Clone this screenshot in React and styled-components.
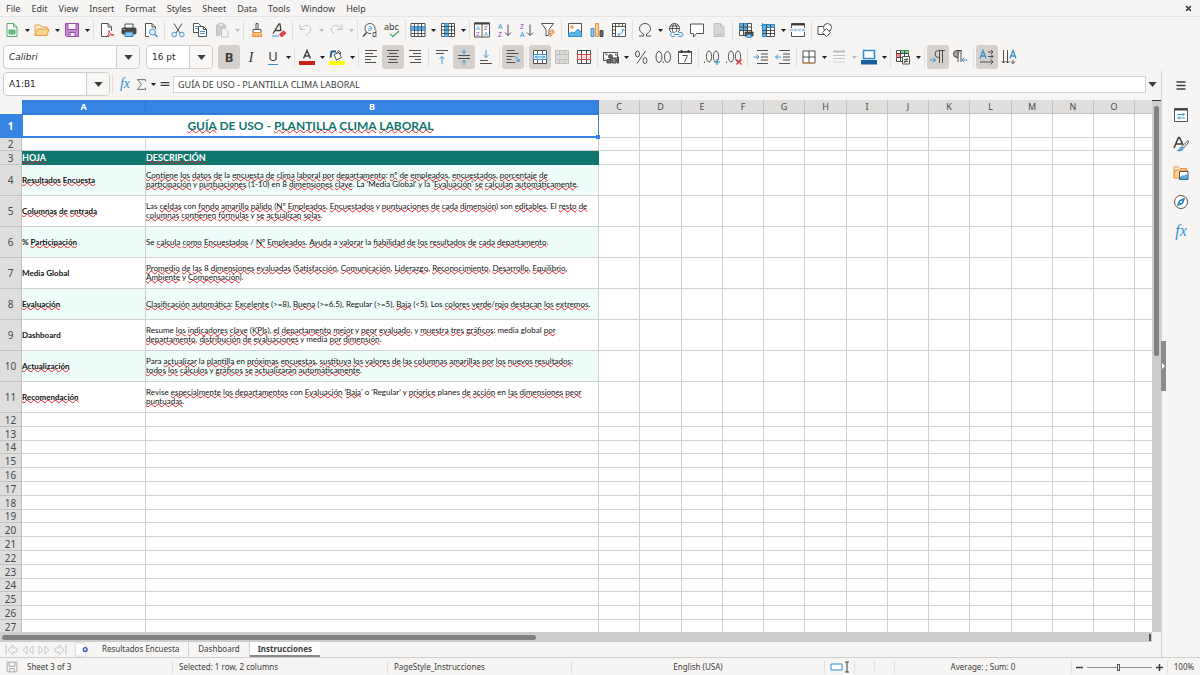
import React from 'react'
import styled, { createGlobalStyle, css } from 'styled-components'

const INK = '#3f3f3d'
const BLUE = '#2f8fd0'
const GREY = '#bdbcba'
const ORANGE = '#ed8733'
const RED = '#e0303b'
const PURPLE = '#a33bb5'

const sans = "'Noto Sans', sans-serif"

// 16x16 drawings, stroked in ink unless told otherwise
const icons = {
  new: (
    <>
      <path d='M3 1.500h6.500l3.500 3.500v9.500H3z' fill='#fff' stroke='#3aa655' />
      <path d='M9.500 1.500V5H13' stroke='#3aa655' />
      <path d='M5 8h6v4H5zM5 10h6M8 8v4' stroke='#3aa655' fill='#9fdcae' />
    </>
  ),
  open: (
    <>
      <path d='M1 13.500V3h5l1.500 2H13v2.500' fill='#fff3df' stroke='#e8953a' />
      <path d='M1 13.500L3.500 7H15l-2 6.500z' fill='#fbd38d' stroke='#e8953a' />
    </>
  ),
  save: (
    <>
      <path d='M1.500 1.500h13v13h-12l-1-1z' fill='#c788d6' stroke='#953fa8' />
      <path d='M4 1.500h8v6H4z' fill='#fafafa' stroke='#953fa8' />
      <path d='M5 10.500h6v4H5z' fill='#fafafa' stroke='#953fa8' />
      <path d='M6.500 11.500v2' stroke='#953fa8' />
    </>
  ),
  pdf: (
    <>
      <path d='M10 14.500H2.500v-13H9L12.500 5v4' fill='#fff' />
      <path d='M9 1.500V5h3.500' />
      <path d='M7.500 15c2-2 3-4 2.500-6.500 .5 3 2 4.500 5 4.500-3-.5-5 .2-7.500 2z' stroke={RED} />
    </>
  ),
  print: (
    <>
      <path d='M4 6V2h8v4' fill='#fff' />
      <rect x='1' y='6' width='14' height='6' rx='1' fill='#4a4a48' />
      <path d='M4 10h8v4.500H4z' fill='#8fc6ee' stroke='#2877b0' />
      <path d='M2.500 7.500h1' stroke='#fff' />
    </>
  ),
  preview: (
    <>
      <path d='M6 14.500H2.500v-13H9L12.500 5v2' fill='#fff' />
      <path d='M9 1.500V5h3.500' />
      <circle cx='9.500' cy='10' r='3' stroke={BLUE} fill='#dceefb' />
      <path d='M11.700 12.200l2.800 2.800' stroke={BLUE} strokeWidth='1.400' />
    </>
  ),
  cut: (
    <>
      <path d='M4 1.500l6 9.500M12 1.500L6 11' />
      <circle cx='4.200' cy='12.500' r='2.300' stroke={BLUE} />
      <circle cx='11.800' cy='12.500' r='2.300' stroke={BLUE} />
    </>
  ),
  copy: (
    <>
      <path d='M6 10.500H1.500v-9h5L9 4' fill='#fff' />
      <path d='M3 4.500h3M3 6.500h3' stroke={BLUE} />
      <path d='M6.500 4.500h5l3 3v7h-8z' fill='#fff' />
      <path d='M11.500 4.500v3h3' />
      <path d='M8 9.500h5M8 11.500h5' stroke={BLUE} />
    </>
  ),
  paste: (
    <>
      <path d='M6 13.500H2.500V3h9v3' stroke={GREY} fill='#cfcecc' />
      <path d='M5 1.500h4v3H5z' stroke={GREY} fill='#eee' />
      <path d='M7.500 6.500h4l2.500 2.500v6H7.500z' stroke={GREY} fill='#f4f4f4' />
    </>
  ),
  brush: (
    <>
      <path d='M7 1.500h2v6H7z' fill='#fff' />
      <path d='M4 7.500h8v3H4z' fill='#fff' />
      <path d='M4 10.500h8l.8 4H3.200z' fill='#f9c78b' stroke={ORANGE} />
      <path d='M6 12.500v2M9 12.500v2' stroke={ORANGE} />
    </>
  ),
  clear: (
    <>
      <path d='M2 11.500L8 2h1l1 7M4 8.500h5.500' strokeWidth='1.300' />
      <path d='M8.500 12.500l4-3.500 2.500 2-3.500 3.500H10z' fill='#e5484f' stroke='#d0303a' />
      <path d='M1 14h7' stroke={BLUE} />
    </>
  ),
  undo: <path d='M2 2.500v5h5M2.500 7C5 3.500 9 2 11.500 4.500S13 10 7.500 14' stroke={GREY} />,
  redo: <path d='M14 2.500v5H9M13.500 7C11 3.500 7 2 4.500 4.500S3 9 6 11' stroke={GREY} />,
  find: (
    <>
      <circle cx='8' cy='6.500' r='5' fill='#fff' />
      <path d='M4.500 10.500L1 14.500' strokeWidth='1.300' />
      <Glyph x='5.500' y='9' size='8' fill={BLUE}>a</Glyph>
      <rect x='9' y='8' width='7' height='8' fill='#f6f5f4' stroke='none' />
      <Glyph x='10' y='15' size='8'>d</Glyph>
    </>
  ),
  spell: (
    <>
      <Glyph x='0' y='8' size='9'>abc</Glyph>
      <path d='M6 12l3 2.500 6-5.500' stroke='#3aa655' strokeWidth='1.200' />
    </>
  ),
  row: (
    <>
      <path d='M1 1.500h14v13H1z' fill='#fff' />
      <path d='M1 4.500h14v4H1z' fill='#5fb0e6' stroke={BLUE} />
      <path d='M1 11.500h14M4.500 1.500v13M8 1.500v13M11.500 1.500v13' />
    </>
  ),
  col: (
    <>
      <path d='M1.500 1.500h13v13h-13z' fill='#fff' />
      <path d='M4.500 1.500h4v13h-4z' fill='#5fb0e6' stroke={BLUE} />
      <path d='M1.500 4.500h13M1.500 8h13M1.500 11.500h13M11.500 1.500v13' />
    </>
  ),
  sort: (
    <>
      <path d='M.5 1h15v14H.5zM8 1v14' fill='#fff' />
      <path d='M.5 1.500h15' strokeWidth='2' />
      <Glyph x='2' y='8' size='6' fill={BLUE}>A</Glyph>
      <Glyph x='2' y='14' size='6' fill={PURPLE}>Z</Glyph>
      <Glyph x='10' y='8' size='6' fill={PURPLE}>Z</Glyph>
      <Glyph x='10' y='14' size='6' fill={BLUE}>A</Glyph>
    </>
  ),
  az: (
    <>
      <Glyph x='2' y='7' size='7' fill={BLUE}>A</Glyph>
      <Glyph x='2' y='15' size='7' fill={PURPLE}>Z</Glyph>
      <path d='M12 2.500v11M9 10.500l3 3 3-3' />
    </>
  ),
  za: (
    <>
      <Glyph x='2' y='7' size='7' fill={PURPLE}>Z</Glyph>
      <Glyph x='2' y='15' size='7' fill={BLUE}>A</Glyph>
      <path d='M12 2.500v11M9 10.500l3 3 3-3' />
    </>
  ),
  filter: (
    <>
      <path d='M1.500 1.500h12L9 7.500v5.500l-3 1V7.500z' fill='#fff' />
      <path d='M11.500 8L9 11.500h2.500L10 15l4.500-5H12l1.500-2z' fill='#fbd38d' stroke={ORANGE} />
    </>
  ),
  image: (
    <>
      <path d='M1.500 1.500h13v13h-13z' fill='#fff' />
      <circle cx='5' cy='5' r='1.300' fill='#fbd38d' stroke={ORANGE} />
      <path d='M1.500 12l3.500-2 2 1 4-4 3.500 3.500v4h-13z' fill='#5fb0e6' stroke={BLUE} />
    </>
  ),
  chart: (
    <>
      <path d='M2 6.500h3v8H2z' fill='#8fc6ee' stroke={BLUE} />
      <path d='M6.500 1.500h3v13h-3z' fill='#fbd38d' stroke={ORANGE} />
      <path d='M11 8.500h3v6h-3z' fill='#6a6a68' />
    </>
  ),
  pivot: (
    <>
      <path d='M1.500 1.500h13v13h-13zM1.500 4.500h13M4.500 1.500v13M8 1.500v3M11.500 1.500v3M1.500 8h3M1.500 11.500h3' fill='#fff' />
      <path d='M7 12.500c3 0 5-2 5-5M10.500 8.500L12 7l1.500 1.500M8.500 11L7 12.500 8.500 14' stroke={BLUE} />
    </>
  ),
  omega: <path d='M2 14h4.500v-2C3.500 10.500 2.500 8.500 2.500 6.500 2.500 3.500 5 1.500 8 1.500s5.500 2 5.500 5c0 2-1 4-4 5.500v2H14' />,
  globe: (
    <>
      <circle cx='7.500' cy='6.500' r='5' fill='#fff' />
      <path d='M2.500 6.500h10M7.500 1.500c-3 3-3 7 0 10M7.500 1.500c3 3 3 7 0 10M3.500 4h8' />
      <rect x='3' y='10' width='13' height='5' fill='#f6f5f4' stroke='none' />
      <path d='M8 10.500H5.500a2 2 0 000 4H8M11.500 10.500H14a2 2 0 010 4h-2.500M7 12.500h5.500' stroke={BLUE} />
    </>
  ),
  comment: <path d='M1.500 2h13v9.500H7.500L4.500 15v-3.500h-3z' fill='#fff' />,
  page: <path d='M3 1.500h6.500L13 5v9.500H3zM9.500 1.500V5H13M5 12.500h6' stroke={GREY} fill='#d7d6d4' />,
  printArea: (
    <>
      <path d='M1.500 1.500h12v12h-12z' fill='#fff' />
      <path d='M1.500 1.500h8v7h-8z' fill='#5fb0e6' stroke={BLUE} />
      <path d='M1.500 5h12M1.500 8.500h12M5.500 1.500v12M9.500 1.500v12' />
      <path d='M7 10h8v4H7z' fill='#4a4a48' />
      <path d='M9 12.500h4v3H9z' fill='#8fc6ee' stroke={BLUE} />
    </>
  ),
  freeze: (
    <>
      <path d='M2.500 2.500h12v12h-12z' fill='#fff' />
      <path d='M2.500 2.500h12v3h-8v9h-4z' fill='#5fb0e6' stroke={BLUE} />
      <path d='M2.500 8.500h12M2.500 11.500h12M6.500 2.500v12M10.500 2.500v12' />
      <path d='M.5 3.500h4M2.500 1v5' stroke={BLUE} />
    </>
  ),
  split: (
    <>
      <path d='M1.500 6V1.500h13V6M1.500 10v4.500h13V10' fill='#fff' />
      <path d='M1.500 2.500h13' strokeWidth='2' />
      <path d='M0 8h16' stroke={BLUE} strokeDasharray='3 1' />
    </>
  ),
  shapes: (
    <>
      <path d='M1 4.500h8.500v8H1z' fill='#fff' />
      <circle cx='10.500' cy='5.500' r='4' fill='#fff' />
      <path d='M9.500 6.500l4 4-4 4-4-4z' fill='#fff' />
    </>
  ),
  fontColor: (
    <>
      <path d='M4.500 9.500L8 1.500l3.500 8M5.500 7h5' strokeWidth='1.400' />
      <rect x='0' y='12' width='16' height='4' fill='#c9211e' stroke='none' />
    </>
  ),
  fill: (
    <>
      <path d='M5 5.500l5-2 2.500 5-5 2.500zM7.500 4.500l2-3 2 1.500v2' fill='#fff' />
      <path d='M1.500 8.500l1-6h4.500' stroke='#1c5f96' strokeWidth='1.800' />
      <rect x='0' y='12' width='16' height='4' fill='#ffff00' stroke='none' />
    </>
  ),
  left: <path d='M2 1.500h12M2 4.500h8M2 7.500h12M2 10.500h6M2 13.500h11' />,
  center: <path d='M2 1.500h12M4 4.500h8M2 7.500h12M4 10.500h8M3 13.500h10' />,
  right: <path d='M2 1.500h12M6 4.500h8M2 7.500h12M8 10.500h6M3 13.500h11' />,
  top: (
    <>
      <path d='M2 1.500h12M2 4.500h8' />
      <path d='M8 15V7.500M5.500 10L8 7.500l2.500 2.500' stroke={BLUE} />
    </>
  ),
  middle: (
    <>
      <path d='M2 6.500h12M2 9.500h12' />
      <path d='M8 0v4.500M6 2.500l2 2 2-2M8 16v-4.500M6 13.500l2-2 2 2' stroke={BLUE} />
    </>
  ),
  bottom: (
    <>
      <path d='M2 11.500h8M2 14.500h12' />
      <path d='M8 1v7.500M5.500 6L8 8.500 10.500 6' stroke={BLUE} />
    </>
  ),
  wrap: (
    <>
      <path d='M1.500 1.500h8M1.500 4.500h12M1.500 7.500h7M1.500 10.500h5M1.500 13.500h9' />
      <path d='M9 7.500c2.500 0 4 1.500 4.500 5M11 10.500l2.500 2.500 1.500-3' stroke={BLUE} />
    </>
  ),
  merge: (
    <>
      <path d='M1.500 1.500h13v13h-13zM5.500 1.500v13M10.500 1.500v13' fill='#fff' />
      <path d='M1.500 5.500h13v5h-13z' fill='#e7f4fd' stroke={BLUE} />
      <path d='M3 8h10M5 6.500L3.500 8 5 9.500M11 6.500L12.500 8 11 9.500' stroke={BLUE} />
    </>
  ),
  mergeOff: (
    <path d='M1.500 1.500h13v13h-13zM5.500 1.500v4M10.500 1.500v4M5.500 10.500v4M10.500 10.500v4M1.500 5.500h13v5h-13z' fill='#dddcda' stroke={GREY} />
  ),
  unmerge: (
    <>
      <path d='M1.500 1.500h13v13h-13zM5.500 1.500v4M10.500 1.500v4M5.500 10.500v4M10.500 10.500v4' fill='#fff' />
      <path d='M1.500 5.500h13v5h-13zM5.500 5.500v5M10.500 5.500v5' fill='#fde7e7' stroke={RED} />
    </>
  ),
  currency: (
    <>
      <path d='M.5 3.500h14v8H.5z' fill='#fff' />
      <path d='M2 5h2v1.500M12 5h1v2M2 10V9' />
      <circle cx='7.500' cy='7.500' r='2' fill='#6a6a68' />
      <path d='M9 9h4v5H9z' fill='#8a8a88' />
      <path d='M4 10.500h4v3.500H4zM14 8h1.500v6H14z' fill='#6a6a68' />
    </>
  ),
  date: (
    <>
      <path d='M1.500 2.500h13v12h-13z' fill='#fff' />
      <path d='M1.500 3h13M4.500 1v3M11.500 1v3' strokeWidth='1.600' />
      <path d='M5.500 6.500h5l-3 6.500' />
    </>
  ),
  percent: (
    <>
      <path d='M12.500 2L4 14.500' />
      <ellipse cx='4.500' cy='5' rx='2' ry='3' />
      <ellipse cx='12' cy='11.500' rx='2' ry='3' />
    </>
  ),
  number: (
    <>
      <ellipse cx='4' cy='8' rx='3' ry='5.500' />
      <ellipse cx='12.500' cy='8' rx='3' ry='5.500' />
      <path d='M8.300 12.500v1.500' />
    </>
  ),
  addDec: (
    <>
      <path d='M.5 12.500v1.500' />
      <ellipse cx='5' cy='7.500' rx='2.600' ry='5.500' />
      <ellipse cx='12' cy='7.500' rx='2.600' ry='5.500' />
      <path d='M13 10v6M10 13h6' stroke={BLUE} strokeWidth='1.200' />
    </>
  ),
  delDec: (
    <>
      <path d='M.5 12.500v1.500' />
      <ellipse cx='5' cy='7.500' rx='2.600' ry='5.500' />
      <ellipse cx='12' cy='7.500' rx='2.600' ry='5.500' />
      <path d='M10.500 10.500l5 5M15.500 10.500l-5 5' stroke={RED} strokeWidth='1.200' />
    </>
  ),
  indent: (
    <>
      <path d='M4 1.500h11M8 5h7M8 8h7M8 11h7M4 14.500h11' />
      <path d='M.5 8h5M3.500 5.500L6 8l-2.500 2.500' stroke={BLUE} />
    </>
  ),
  outdent: (
    <>
      <path d='M4 1.500h11M8 5h7M8 8h7M8 11h7M4 14.500h11' />
      <path d='M6 8H.5M3 5.500L.5 8 3 10.500' stroke={BLUE} />
    </>
  ),
  border: (
    <>
      <path d='M2 2h12v12H2zM8 2v12M2 8h12' fill='#fff' />
      <path d='M2 14h12' stroke={ORANGE} />
    </>
  ),
  lineStyle: (
    <>
      <path d='M2 2.500h12' stroke={GREY} strokeWidth='2' />
      <path d='M2 6.500h12M2 9.500h12' stroke={GREY} />
      <path d='M2 13h12' stroke={GREY} strokeDasharray='1.500 1' />
    </>
  ),
  lineColor: (
    <>
      <path d='M2.500 1.500h11v8h-11z' fill='#fff' stroke={BLUE} strokeWidth='1.600' />
      <rect x='0' y='11' width='16' height='4.500' fill='#1c5f9e' stroke='none' />
    </>
  ),
  conditional: (
    <>
      <path d='M1.500 1.500h12v11h-12z' fill='#fff' />
      <path d='M5.500 1.500h8v3h-8z' fill='#7fce8f' stroke='#3aa655' />
      <path d='M1.500 4.500h4v4h-4z' fill='#f08a8a' stroke={RED} />
      <path d='M1.500 8.500h12M5.500 1.500v11M9.500 1.500v11M1.500 4.500h12' />
      <path d='M7.500 7.500h7v7.500h-7z' fill='#fff' />
      <path d='M9 10.500h4M9 12.500h4M12.500 9l-3 5' />
    </>
  ),
  ltr: (
    <>
      <path d='M15 1.500H8.500a3.500 3.500 0 000 7H9M9.500 1.500V14M12.500 1.500V14' />
      <path d='M0 11h5.500M3 8.500L5.500 11 3 13.500' stroke={BLUE} />
    </>
  ),
  rtl: (
    <>
      <path d='M8 1.500H5a3.500 3.500 0 000 7h1' fill='#aaa' />
      <path d='M6 1.500V13M9 1.500V13M5 1.500h5' />
      <path d='M15.500 11H10M12.500 8.500L10 11l2.500 2.500' stroke={BLUE} />
    </>
  ),
  horizontal: (
    <>
      <path d='M1 9.500L4 1.500l3 8M2 7h4' stroke={BLUE} strokeWidth='1.300' />
      <path d='M9 3h5M12 1l2 2-2 2M9 7.500h5M12 5.500l2 2-2 2M1 13h13M11.500 10.500L14 13l-2.500 2.500' />
    </>
  ),
  vertical: (
    <>
      <path d='M9 9.500l3-8 3 8M10 7h4' stroke={BLUE} strokeWidth='1.300' />
      <path d='M2.500 1v13M.5 12l2 2 2-2M6.500 1v13M4.500 12l2 2 2-2M12 11v3.500M10 12.500l2 2 2-2' />
    </>
  ),
  sigma: <path d='M13 4V2H3l5 6-5 6h10v-2' />,
  equals: <path d='M3 6.500h10M3 9.500h10' strokeWidth='1.500' />,
  menu: <path d='M3.500 4h9M3.500 7.500h9M3.500 11h9' strokeWidth='1.500' />,
  properties: (
    <>
      <path d='M1.500 1.500h13v13h-13z' fill='#fff' />
      <path d='M1.500 2.500h13' strokeWidth='2' />
      <path d='M4 7.500h8M4 11h8M10 6v3M6 9.500v3' stroke={BLUE} />
    </>
  ),
  styles: (
    <>
      <path d='M1 12L5.500 1.500h1L10 9M2.800 8h6' strokeWidth='1.600' />
      <path d='M15 4.500l-6 6 1.500 1.500 5-5.500z' fill='#fff' />
      <path d='M4.500 14.500c2 0 2-3 4-3.500l1.500 1.500c-.5 2-3 3-5.500 2z' fill='#5fb0e6' stroke={BLUE} />
    </>
  ),
  gallery: (
    <>
      <path d='M1 12.500V2h4.500L7 3.500h6.500V6' fill='#fff3df' stroke={ORANGE} />
      <path d='M2 5h12.500v8H1z' fill='#fbd38d' stroke={ORANGE} />
      <path d='M6.500 6.500h8.500v8H6.500z' fill='#fff' />
      <path d='M7 13l2.500-2.500 1.500 1 2-2 1.500 1.500v3H7z' fill='#5fb0e6' stroke={BLUE} />
    </>
  ),
  navigator: (
    <>
      <circle cx='8' cy='8' r='6.500' fill='#fff' />
      <path d='M11.500 4.500L9.500 9.500l-5 2 2-5z' fill={BLUE} stroke='#1c6fae' />
      <circle cx='8' cy='8' r='1' fill='#fff' stroke='none' />
    </>
  ),
  first: <path d='M2 3v10M9 3L4 8l5 5v-3h4V6H9z' stroke='#c4c3c1' />,
  prev: <path d='M7 4L3 8l4 4zM13 4L9 8l4 4z' stroke='#c4c3c1' />,
  next: <path d='M3 4l4 4-4 4zM9 4l4 4-4 4z' stroke='#c4c3c1' />,
  last: <path d='M14 3v10M7 3l5 5-5 5v-3H3V6h4z' stroke='#c4c3c1' />,
  addSheet: (
    <>
      <path d='M2.500 1h8l3 3v11h-11z' fill='#fff' stroke='#d6d5d3' />
      <circle cx='13' cy='8' r='2' stroke='#2a5da8' strokeWidth='1.500' />
    </>
  ),
  disk: (
    <path d='M1.500 1.500h13v13h-13zM4 1.500V7h8V1.500M5 14.500V10h6v4.500' stroke='#8d8c8a' />
  ),
  close: <path d='M4.500 4.500l7 7M11.500 4.500l-7 7' strokeWidth='2.200' />,
}

const standardBar = [
  'new+', 'open+', 'save+', '|', 'pdf', 'print', 'preview', '|',
  'cut', 'copy', 'paste-', '|', 'brush', 'clear', '|', 'undo-', 'redo-', ':',
  'find', 'spell', ':', 'row+', 'col+', ':', 'sort', 'az', 'za', 'filter', '|',
  'image', 'chart', 'pivot', ':', 'omega+', 'globe', 'comment', 'page', '|',
  'printArea', 'freeze+', 'split', '|', 'shapes',
]

const formatBar = [
  'bold*', 'italic', 'underline+', ':', 'fontColor+', 'fill+', ':',
  'left', 'center*', 'right', '|', 'top', 'middle*', 'bottom', '|', 'wrap*', '|',
  'merge*', 'mergeOff', 'unmerge', '|', 'currency+', 'percent', 'number', 'date', '|',
  'addDec', 'delDec', '|', 'indent', 'outdent', ':', 'border+', 'lineStyle-', 'lineColor+', ':',
  'conditional+', '|', 'ltr*', 'rtl', '|', 'horizontal*', 'vertical',
]

const letters = { bold: 'B', italic: 'I', underline: 'U' }

const menus = ['File', 'Edit', 'View', 'Insert', 'Format', 'Styles', 'Sheet', 'Data', 'Tools', 'Window', 'Help']

const columns = ['C', 'D', 'E', 'F', 'G', 'H', 'I', 'J', 'K', 'L', 'M', 'N', 'O', 'P', 'Q', 'R']

const guide = [
  ['Resultados Encuesta', 'Contiene los datos de la encuesta de clima laboral por departamento: nº de empleados, encuestados, porcentaje de', "participación y puntuaciones (1-10) en 8 dimensiones clave. La 'Media Global' y la 'Evaluación' se calculan automáticamente."],
  ['Columnas de entrada', 'Las celdas con fondo amarillo pálido (Nº Empleados, Encuestados y puntuaciones de cada dimensión) son editables. El resto de', 'columnas contienen fórmulas y se actualizan solas.'],
  ['% Participación', 'Se calcula como Encuestados / Nº Empleados. Ayuda a valorar la fiabilidad de los resultados de cada departamento.'],
  ['Media Global', 'Promedio de las 8 dimensiones evaluadas (Satisfacción, Comunicación, Liderazgo, Reconocimiento, Desarrollo, Equilibrio,', 'Ambiente y Compensación).'],
  ['Evaluación', 'Clasificación automática: Excelente (>=8), Buena (>=6.5), Regular (>=5), Baja (<5). Los colores verde/rojo destacan los extremos.'],
  ['Dashboard', 'Resume los indicadores clave (KPIs), el departamento mejor y peor evaluado, y muestra tres gráficos: media global por', 'departamento, distribución de evaluaciones y media por dimensión.'],
  ['Actualización', 'Para actualizar la plantilla en próximas encuestas, sustituya los valores de las columnas amarillas por los nuevos resultados;', 'todos los cálculos y gráficos se actualizarán automáticamente.'],
  ['Recomendación', "Revise especialmente los departamentos con Evaluación 'Baja' o 'Regular' y priorice planes de acción en las dimensiones peor", 'puntuadas.'],
]

const emptyRows = Array.from({ length: 20 }, (_, i) => i + 12)

// words the English spell checker accepts, everything else gets a red wave
const known = new Set([
  'DE', 'USO', 'la', 'La', 'y', 'a', 'o', 'en', 'con', 'son', 'El', 'Se', 'Las', 'Los',
  'Media', 'media', 'Global', 'global', 'Regular', 'Resume', 'Revise', 'Para', 'planes', 'Dashboard',
])

function Glyph({ x, y, size, fill = INK, children }) {
  return (
    <text x={x} y={y} fontSize={size} fill={fill} stroke='none' fontFamily={sans}>
      {children}
    </text>
  )
}

const Icon = ({ name, size = 16 }) => (
  <IconSvg viewBox='0 0 16 16' width={size} height={size} aria-hidden='true'>
    {icons[name]}
  </IconSvg>
)

const Caret = ({ big }) => (
  <svg width={big ? 9 : 5} height={big ? 5 : 3} viewBox='0 0 10 6' aria-hidden='true'>
    <path d='M0 0h10L5 6z' fill='currentColor' />
  </svg>
)

const Tools = ({ items }) =>
  items.map((item, index) => {
    if (item === '|' || item === ':') {
      return <Separator key={index} $tight={item === ':'} />
    }
    const name = item.replace(/[+*-]$/, '')
    const flag = item.slice(name.length)
    return (
      <React.Fragment key={index}>
        <ToolButton type='button' aria-label={name} $pressed={flag === '*'}>
          {letters[name] ? <Letter $kind={name}>{letters[name]}</Letter> : <Icon name={name} />}
        </ToolButton>
        {(flag === '+' || flag === '-') && (
          <CaretButton type='button' aria-label={`${name} options`} disabled={flag === '-'}>
            <Caret />
          </CaretButton>
        )}
      </React.Fragment>
    )
  })

const Combo = ({ label, value, width, italic }) => (
  <ComboBox $width={width}>
    <ComboInput aria-label={label} defaultValue={value} $italic={italic} />
    <ComboButton type='button' aria-label={`${label} list`}>
      <Caret big />
    </ComboButton>
  </ComboBox>
)

const Spelled = ({ text }) =>
  text
    .split(/([\p{L}º]+)/u)
    .map((part, i) => (i % 2 && !known.has(part) ? <Typo key={i}>{part}</Typo> : part))

const Blanks = () => columns.map((name) => <Cell key={name} />)

const Sheet = () => (
  <Grid>
    <colgroup>
      <Col $width={22} />
      <Col $width={124} />
      <Col $width={453} />
      {columns.map((name, i) => (
        <Col key={name} $width={i % 4 === 1 ? 42 : 41} />
      ))}
    </colgroup>
    <thead>
      <Row $height={14}>
        <Corner />
        <ColHead scope='col' $selected>A</ColHead>
        <ColHead scope='col' $selected>B</ColHead>
        {columns.map((name) => (
          <ColHead key={name} scope='col'>{name}</ColHead>
        ))}
      </Row>
    </thead>
    <tbody>
      <Row $height={24}>
        <RowHead scope='row' $selected>1</RowHead>
        <TitleCell colSpan={2}>
          <Spelled text='GUÍA DE USO - PLANTILLA CLIMA LABORAL' />
          <Handle />
        </TitleCell>
        <Blanks />
      </Row>
      <Row $height={13}>
        <RowHead scope='row'>2</RowHead>
        <Cell />
        <Cell />
        <Blanks />
      </Row>
      <Row $height={14}>
        <RowHead scope='row'>3</RowHead>
        <BandCell><Spelled text='HOJA' /></BandCell>
        <BandCell><Spelled text='DESCRIPCIÓN' /></BandCell>
        <Blanks />
      </Row>
      {guide.map(([title, ...lines], i) => (
        <Row key={title} $height={31}>
          <RowHead scope='row'>{i + 4}</RowHead>
          <Cell $mint={i % 2 === 0} $bold><Spelled text={title} /></Cell>
          <Cell $mint={i % 2 === 0}>
            {lines.map((line) => (
              <Line key={line}><Spelled text={line} /></Line>
            ))}
          </Cell>
          <Blanks />
        </Row>
      ))}
      {emptyRows.map((n) => (
        <Row key={n} $height={n % 5 === 4 ? 13 : 14}>
          <RowHead scope='row'>{n}</RowHead>
          <Cell />
          <Cell />
          <Blanks />
        </Row>
      ))}
    </tbody>
  </Grid>
)

const App = () => (
  <>
    <GlobalStyle />
    <Window>
      <MenuBar>
        {menus.map((name) => (
          <MenuItem key={name} type='button'>{name}</MenuItem>
        ))}
        <CloseButton type='button' aria-label='Close'>
          <Icon name='close' size={11} />
        </CloseButton>
      </MenuBar>
      <Toolbar $height={26}>
        <Tools items={standardBar} />
      </Toolbar>
      <Toolbar $height={28}>
        <Combos>
          <Combo label='Font name' value='Calibri' width={137} italic />
          <Combo label='Font size' value='16 pt' width={67} />
        </Combos>
        <Tools items={formatBar} />
      </Toolbar>
      <Workspace>
        <Main>
          <FormulaBar>
            <Combo label='Name box' value='A1:B1' width={107} />
            <Separator />
            <FormulaTools>
              <FormulaButton type='button' aria-label='Function wizard'><Fx>fx</Fx></FormulaButton>
              <FormulaButton type='button' aria-label='Sum'><Icon name='sigma' size={13} /></FormulaButton>
              <CaretButton type='button' aria-label='Sum options'><Caret /></CaretButton>
              <FormulaButton type='button' aria-label='Formula'><Icon name='equals' size={14} /></FormulaButton>
            </FormulaTools>
            <FormulaInput aria-label='Input line' defaultValue='GUÍA DE USO - PLANTILLA CLIMA LABORAL' />
            <ExpandButton type='button' aria-label='Expand formula bar'><Caret big /></ExpandButton>
          </FormulaBar>
          <SheetArea>
            <SheetView>
              <Sheet />
            </SheetView>
            <VerticalTrack>
              <VerticalThumb />
            </VerticalTrack>
          </SheetArea>
          <HorizontalTrack>
            <HorizontalThumb />
            <Stop />
          </HorizontalTrack>
          <Tabs>
            <TabNav>
              {['first', 'prev', 'next', 'last'].map((name) => (
                <NavButton key={name} type='button' aria-label={`${name} sheet`}>
                  <Icon name={name} />
                </NavButton>
              ))}
            </TabNav>
            <AddButton type='button' aria-label='Add sheet'><Icon name='addSheet' size={15} /></AddButton>
            <Tab type='button'>Resultados Encuesta</Tab>
            <Tab type='button'>Dashboard</Tab>
            <Tab type='button' $active>Instrucciones</Tab>
          </Tabs>
        </Main>
        <SideBar>
          <SideGrip />
          {['menu', 'properties', 'styles', 'gallery', 'navigator'].map((name) => (
            <SideButton key={name} type='button' aria-label={name}>
              <Icon name={name} />
            </SideButton>
          ))}
          <SideButton type='button' aria-label='functions'><Fx $large>fx</Fx></SideButton>
        </SideBar>
      </Workspace>
      <StatusBar>
        <StatusPart $width={172} $start>
          <Icon name='disk' size={12} />
          <span>Sheet 3 of 3</span>
        </StatusPart>
        <StatusPart $width={215} $start>Selected: 1 row, 2 columns</StatusPart>
        <StatusPart $width={184} $start>PageStyle_Instrucciones</StatusPart>
        <StatusPart $width={200} $grow>English (USA)</StatusPart>
        <StatusPart $width={30}>
          <svg width='20' height='12' viewBox='0 0 20 12' aria-hidden='true'>
            <path d='M1 3h11v6H1z' fill='#fff' stroke={BLUE} />
            <path d='M15 1h4M17 1v10M15 11h4' stroke={INK} fill='none' />
          </svg>
        </StatusPart>
        <StatusPart $width={20} />
        <StatusPart $width={20} />
        <StatusPart $width={177}>Average: ; Sum: 0</StatusPart>
        <StatusPart $width={96}>
          <ZoomButton type='button' aria-label='Zoom out'>
            <svg width='7' height='7' viewBox='0 0 7 7'><path d='M0 3.500h7' stroke='currentColor' strokeWidth='1.500' /></svg>
          </ZoomButton>
          <ZoomRange type='range' aria-label='Zoom' defaultValue='48' />
          <ZoomButton type='button' aria-label='Zoom in'>
            <svg width='7' height='7' viewBox='0 0 7 7'><path d='M0 3.500h7M3.500 0v7' stroke='currentColor' strokeWidth='1.500' /></svg>
          </ZoomButton>
        </StatusPart>
        <StatusPart $width={33}>100%</StatusPart>
      </StatusBar>
    </Window>
  </>
)

export default App

const GlobalStyle = createGlobalStyle`
  * {
    box-sizing: border-box;
  }
  body {
    margin: 0;
    background: #f6f5f4;
    color: #3d3d3b;
    font: 9px/12px ${sans};
  }
  button,
  input {
    margin: 0;
    padding: 0;
    border: 0;
    background: none;
    color: inherit;
    font: inherit;
  }
`

const Window = styled.div`
  display: flex;
  flex-direction: column;
  height: 100vh;
  overflow: hidden;
`

const MenuBar = styled.nav`
  display: flex;
  align-items: center;
  flex: none;
  gap: 1px;
  height: 17px;
  padding: 1px 6px 0 1px;
  border-bottom: 1px solid #e6e5e3;
`

const MenuItem = styled.button`
  padding: 0 5px;
`

const CloseButton = styled.button`
  display: flex;
  margin-left: auto;
`

const Toolbar = styled.div`
  display: flex;
  align-items: center;
  flex: none;
  height: ${(props) => props.$height}px;
  padding: 0 1px;
`

const Combos = styled.div`
  display: flex;
  gap: 6px;
  padding: 0 5px 0 2px;
`

const ToolButton = styled.button`
  display: flex;
  align-items: center;
  justify-content: center;
  flex: none;
  width: 22px;
  height: 24px;
  border-radius: 3px;
  background: ${(props) => (props.$pressed ? '#d5d0cc' : 'transparent')};
`

const CaretButton = styled.button`
  display: flex;
  align-items: center;
  justify-content: center;
  flex: none;
  width: 8px;
  height: 22px;
  color: #1f1f1f;
  &:disabled {
    color: #bbb;
  }
`

const Separator = styled.div`
  flex: none;
  width: ${(props) => (props.$tight ? 4 : 5)}px;
  height: 20px;
  background: linear-gradient(#e2e1df, #e2e1df) center / 1px 100% no-repeat;
`

const Letter = styled.span`
  font-size: 13px;
  line-height: 15px;
  ${(props) => props.$kind === 'bold' && 'font-weight: 700;'}
  ${(props) => props.$kind === 'italic' && "font-family: 'Liberation Serif', serif; font-style: italic; font-size: 15px;"}
  ${(props) => props.$kind === 'underline' && `border-bottom: 1px solid ${BLUE};`}
`

const IconSvg = styled.svg`
  display: block;
  overflow: visible;
  fill: none;
  stroke: ${INK};
  stroke-width: 0.9;
`

const ComboBox = styled.div`
  display: flex;
  flex: none;
  width: ${(props) => props.$width}px;
  height: 24px;
  border: 1px solid #d0cdca;
  border-radius: 4px;
  background: #fff;
  overflow: hidden;
`

const ComboInput = styled.input`
  flex: 1;
  min-width: 0;
  padding: 0 5px;
  color: #2b2b2b;
  outline: 0;
  font: ${(props) => (props.$italic ? 'italic' : 'normal')} 9px 'DejaVu Sans', sans-serif;
`

const ComboButton = styled.button`
  display: flex;
  align-items: center;
  justify-content: center;
  width: 23px;
  border-left: 1px solid #d0cdca;
  background: #f8f7f6;
`

const Workspace = styled.div`
  display: flex;
  flex: 1;
  min-height: 0;
`

const Main = styled.main`
  display: flex;
  flex-direction: column;
  flex: 1;
  min-width: 0;
`

const FormulaBar = styled.div`
  display: flex;
  align-items: center;
  flex: none;
  height: 29px;
  padding: 0 3px 3px;
`

const FormulaTools = styled.div`
  display: flex;
  align-items: center;
  padding-left: 2px;
`

const FormulaButton = styled.button`
  display: flex;
  align-items: center;
  justify-content: center;
  width: 16px;
  height: 20px;
`

const Fx = styled.span`
  color: ${BLUE};
  font: italic ${(props) => (props.$large ? '16px/18px' : '14px/16px')} 'Liberation Serif', serif;
`

const FormulaInput = styled.input`
  flex: 1;
  min-width: 0;
  height: 17px;
  padding: 0 4px;
  border: 1px solid #d6d5d3;
  background: #fff;
  outline: 0;
`

const ExpandButton = styled.button`
  display: flex;
  align-items: center;
  justify-content: center;
  width: 12px;
`

const SheetArea = styled.div`
  display: flex;
  flex: 1;
  min-height: 0;
`

const SheetView = styled.div`
  flex: 1;
  min-width: 0;
  overflow: hidden;
  background: #fff;
`

const Grid = styled.table`
  width: 0;
  table-layout: fixed;
  border-spacing: 0;
  color: #111;
`

const Col = styled.col`
  width: ${(props) => props.$width}px;
`

const Row = styled.tr`
  height: ${(props) => props.$height}px;
`

const headCell = css`
  padding: 0;
  border-right: 1px solid #c3c2c1;
  border-bottom: 1px solid #c3c2c1;
  background: ${(props) => (props.$selected ? '#3584e4' : '#dfdedd')};
  color: ${(props) => (props.$selected ? '#fff' : '#4a4a48')};
  font-weight: ${(props) => (props.$selected ? 700 : 400)};
  line-height: 12px;
`

const Corner = styled.td`
  padding: 0;
  background: #f6f5f4;
`

const ColHead = styled.th`
  ${headCell}
  ${(props) => props.$selected && 'border-color: #2f76cc;'}
`

const RowHead = styled.th`
  ${headCell}
  font-size: 10px;
  ${(props) => props.$selected && 'border-color: #3584e4;'}
`

const Cell = styled.td`
  padding: 0;
  border-right: 1px solid #d0d0d0;
  border-bottom: 1px solid #d0d0d0;
  background: ${(props) => (props.$mint ? '#effdfa' : '#fff')};
  font: ${(props) => (props.$bold ? 700 : 400)} 8px/9px Lato, sans-serif;
  white-space: nowrap;
`

const BandCell = styled(Cell)`
  border-color: #0f766e;
  background: #0f766e;
  color: #fff;
  font: 700 9px/12px Lato, sans-serif;
`

const TitleCell = styled(Cell)`
  position: relative;
  border: 0;
  box-shadow: inset 0 0 0 1px #3584e4, inset 0 -2px 0 #3584e4;
  color: #0f766e;
  font: 700 12px/18px Lato, sans-serif;
  text-align: center;
`

const Handle = styled.span`
  position: absolute;
  right: -1px;
  bottom: -1px;
  width: 4px;
  height: 4px;
  background: #3584e4;
`

const Line = styled.div`
  height: 9px;
`

const Typo = styled.span`
  text-decoration: underline wavy #e0202a 1px;
  text-underline-offset: -1px;
  text-decoration-skip-ink: none;
`

const VerticalTrack = styled.div`
  flex: none;
  width: 9px;
  padding: 5px 2px;
  border-top: 1px solid #3d3d3b;
  background: #cdcdcd;
`

const VerticalThumb = styled.div`
  width: 5px;
  height: 48%;
  border-radius: 3px;
  background: #808080;
`

const HorizontalTrack = styled.div`
  display: flex;
  align-items: center;
  justify-content: space-between;
  flex: none;
  height: 10px;
  margin-right: 9px;
  padding: 0 1px 0 2px;
  background: #cdcdcd;
`

const HorizontalThumb = styled.div`
  width: 46.5%;
  height: 5px;
  border-radius: 3px;
  background: #808080;
`

const Stop = styled.div`
  width: 2px;
  height: 7px;
  background: #555;
`

const Tabs = styled.div`
  display: flex;
  align-items: stretch;
  flex: none;
  height: 15px;
  font-size: 8px;
`

const TabNav = styled.div`
  display: flex;
  padding: 0 5px 0 4px;
`

const NavButton = styled.button`
  display: flex;
  align-items: center;
`

const AddButton = styled.button`
  display: flex;
  align-items: center;
  width: 20px;
`

const Tab = styled.button`
  padding: 0 ${(props) => (props.$active ? 8 : 9)}px;
  border-bottom: 2px solid ${(props) => (props.$active ? '#8a8a88' : 'transparent')};
  background: ${(props) => (props.$active ? '#fff' : 'transparent')};
  font-weight: ${(props) => (props.$active ? 700 : 400)};
  & + & {
    margin-left: 1px;
    box-shadow: -1px 0 0 #d3d2d0;
  }
`

const SideBar = styled.aside`
  position: relative;
  display: flex;
  flex-direction: column;
  align-items: center;
  flex: none;
  width: 39px;
  border-left: 1px solid #d3d2d0;
`

const SideButton = styled.button`
  display: flex;
  align-items: center;
  justify-content: center;
  width: 24px;
  height: 29px;
`

const SideGrip = styled.div`
  position: absolute;
  top: 46%;
  left: -1px;
  width: 5px;
  height: 50px;
  background: #8c8c8a;
  &::after {
    content: '';
    position: absolute;
    top: 22px;
    left: 1px;
    border: 3px solid transparent;
    border-left-color: #fff;
  }
`

const StatusBar = styled.footer`
  display: flex;
  align-items: center;
  flex: none;
  height: 18px;
  padding-top: 1px;
  border-top: 1px solid #cfcecc;
  font-size: 8px;
`

const StatusPart = styled.div`
  display: flex;
  align-items: center;
  justify-content: ${(props) => (props.$start ? 'flex-start' : 'center')};
  flex: ${(props) => (props.$grow ? 1 : 'none')};
  gap: 9px;
  min-width: ${(props) => props.$width}px;
  height: 13px;
  padding: ${(props) => (props.$start ? '0 6px' : '0')};
  white-space: nowrap;
  & + & {
    border-left: 1px solid #e2e1df;
  }
`

const ZoomButton = styled.button`
  display: flex;
`

const ZoomRange = styled.input`
  width: 65px;
  height: 8px;
  margin: 0 -5px;
  appearance: none;
  background: linear-gradient(#8f8e8c, #8f8e8c) center / 100% 1px no-repeat;
  &::-webkit-slider-thumb {
    appearance: none;
    width: 3px;
    height: 7px;
    border: 1px solid #555;
    background: #f6f5f4;
  }
`
